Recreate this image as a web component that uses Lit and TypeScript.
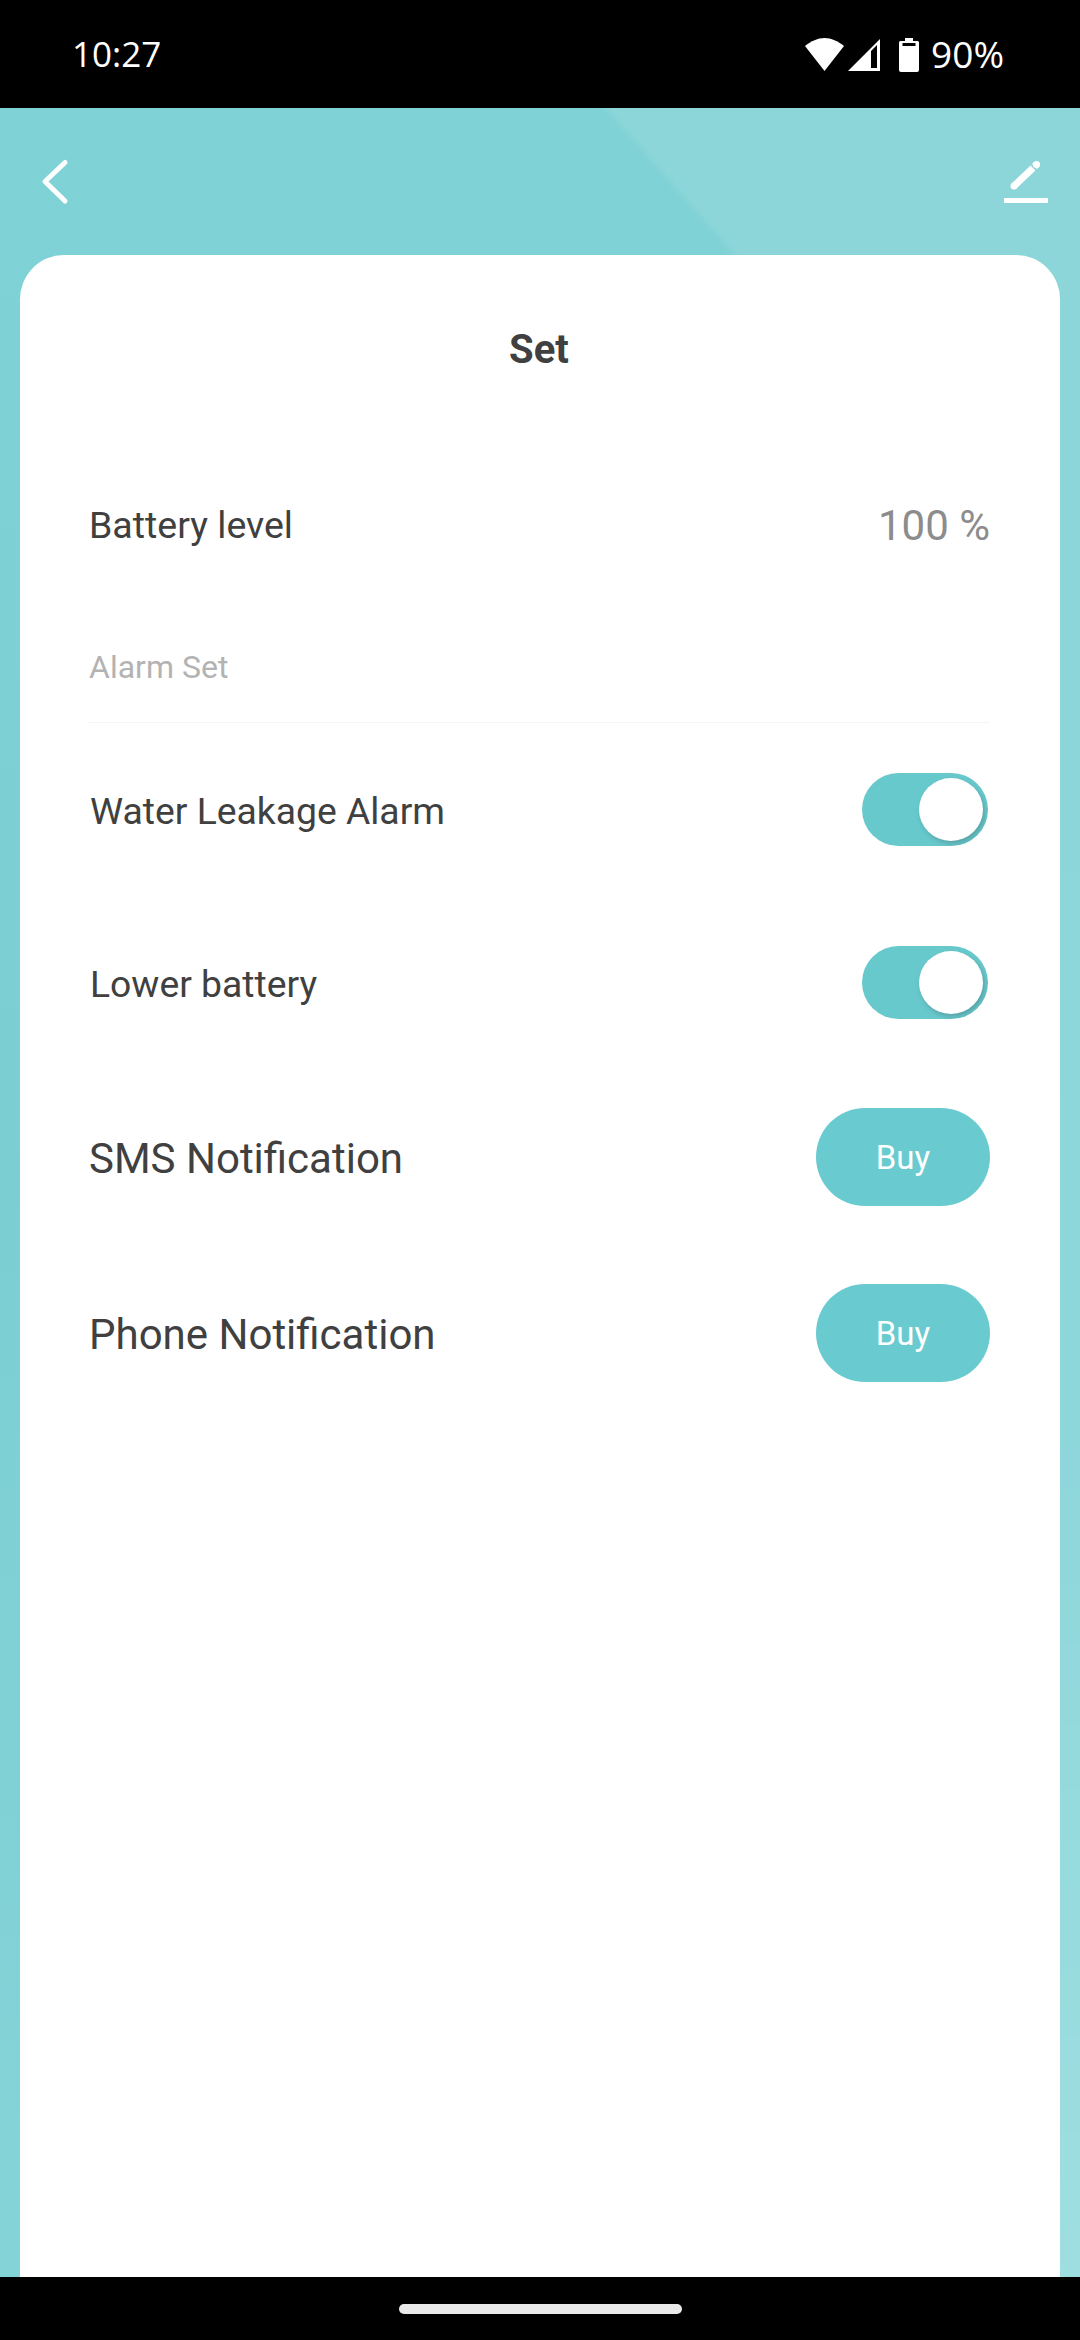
import { LitElement, html, css, svg } from "lit";
import { customElement } from "lit/decorators.js";

@customElement("app-root")
export class AppRoot extends LitElement {
  static styles = css`
    :host { display: block; width: 1080px; height: 2340px; font-family: Roboto, "Liberation Sans", sans-serif; overflow: hidden; }
    .page { width: 1080px; height: 2340px; display: flex; flex-direction: column; background: #000; }
    .status { height: 108px; flex: none; display: flex; align-items: center; justify-content: space-between; padding: 0 76px 0 72px; box-sizing: border-box; color: #fff; font-family: "Open Sans", Inter, sans-serif; font-size: 35px; }
    .time { margin-top: -2px; }
    .status-right { display: flex; align-items: center; }
    .status-right svg { display: block; margin-top: 1px; }
    .signal { margin-left: 4px; }
    .batt { margin-left: 19px; }
    .pct { margin-left: 12px; font-size: 37px; margin-top: -2px; }
    .main { flex: 1; position: relative; display: flex; flex-direction: column; overflow: hidden; }
    .bg { position: absolute; inset: 0; width: 100%; height: 100%; }
    .nav { position: relative; height: 147px; flex: none; display: flex; align-items: center; justify-content: space-between; padding: 0 32px 0 40px; }
    .nav svg { display: block; }
    .card { position: relative; flex: 1; margin: 0 20px; background: #fff; border-radius: 44px 44px 0 0; padding: 0 70px 0 69px; display: flex; flex-direction: column; }
    .title { font-size: 40px; font-weight: 700; color: #404040; text-align: center; line-height: 44px; padding-top: 73px; margin-left: -1px; }
    .row { display: flex; align-items: center; justify-content: space-between; color: #404040; }
    .battery { margin-top: 123px; height: 60px; font-size: 37.5px; }
    .battery .val { font-size: 42px; color: #8c8c8c; }
    .section { margin-top: 90px; font-size: 32px; line-height: 44px; color: #b3b3b3; padding-bottom: 33px; border-bottom: 1px solid #f5f5f5; }
    .sw-row { height: 73px; font-size: 37.3px; padding-left: 1px; }
    .sw-row > span, .buy-row > span { padding-top: 2px; }
    .sw-row.a { margin-top: 50px; }
    .sw-row.b { margin-top: 100px; }
    .switch { width: 126px; height: 73px; margin-right: 2px; border-radius: 37px; background: #68c9cd; position: relative; overflow: hidden; }
    .knob { position: absolute; right: 5px; top: 5px; width: 64px; height: 63px; border-radius: 50%; background: #fff; box-shadow: 2px 3px 5px rgba(70,120,125,.45); }
    .buy-row { height: 98px; font-size: 42px; }
    .buy-row.a { margin-top: 89px; }
    .buy-row.b { margin-top: 78px; }
    .buy { width: 174px; height: 98px; border-radius: 49px; background: #69cbcf; color: #fff; font-size: 33px; display: flex; align-items: center; justify-content: center; }
    .home { height: 63px; flex: none; display: flex; align-items: flex-start; justify-content: center; padding-top: 27px; box-sizing: border-box; }
    .pill { width: 283px; height: 10px; border-radius: 5px; background: #eaeaea; }
  `;

  render() {
    return html`<div class="page">
      <div class="status">
        <span class="time">10:27</span>
        <div class="status-right">
          <svg width="39" height="33" viewBox="0 0 39 33"><path d="M0 8 C6 3 13 0 19.500 0 S33 3 39 8 L19.500 33 Z" fill="#fff"/></svg>
          <svg class="signal" width="32" height="32" viewBox="0 0 32 32"><path fill-rule="evenodd" d="M32 0V32H0ZM29 6 23 12V29H29Z" fill="#fff"/></svg>
          <svg class="batt" width="20" height="34" viewBox="0 0 20 34"><path fill-rule="evenodd" d="M6 0H14V3H18.500Q20 3 20 4.500V32Q20 34 18 34H2Q0 34 0 32V4.500Q0 3 1.500 3H6ZM3.500 5V8H16.500V5Z" fill="#fff"/></svg>
          <span class="pct">90%</span>
        </div>
      </div>
      <div class="main">
        <svg class="bg" viewBox="0 0 1080 2232" preserveAspectRatio="none">
          <defs>
            <linearGradient id="g" x1="0" y1="0" x2="0" y2="1"><stop offset="0" stop-color="#7fd2d5"/><stop offset=".5" stop-color="#7bcfd3"/><stop offset="1" stop-color="#84d3d7"/></linearGradient>
            <linearGradient id="h" x1="0" y1="0" x2="0" y2="1"><stop offset="0" stop-color="#8cd6d9"/><stop offset=".6" stop-color="#8dd6da"/><stop offset="1" stop-color="#9fdfe1"/></linearGradient>
            <filter id="b"><feGaussianBlur stdDeviation="3"/></filter>
          </defs>
          ${svg`<rect width="1080" height="2232" fill="url(#g)"/>
          <path d="M597 -10H1100V2250H1040V160H742Z" fill="url(#h)" filter="url(#b)"/>`}
        </svg>
        <div class="nav">
          <svg width="30" height="48" viewBox="0 0 30 48"><path d="M25 4.500 5 23.500 25 43" fill="none" stroke="#fff" stroke-width="5" stroke-linecap="round" stroke-linejoin="round"/></svg>
          <svg width="44" height="43" viewBox="0 0 44 43">
            <path d="M10 26 29 8" stroke="#fff" stroke-width="7" fill="none"/><circle cx="10" cy="26" r="3.500" fill="#fff"/>
            <path d="M30.500 6.500 32.500 4.500" stroke="#fff" stroke-width="7" fill="none"/><circle cx="32.500" cy="4.500" r="3.500" fill="#fff"/>
            <rect y="38" width="44" height="5" fill="#fff"/>
          </svg>
        </div>
        <div class="card">
          <div class="title">Set</div>
          <div class="row battery"><span>Battery level</span><span class="val">100 %</span></div>
          <div class="section">Alarm Set</div>
          <div class="row sw-row a"><span>Water Leakage Alarm</span><div class="switch"><div class="knob"></div></div></div>
          <div class="row sw-row b"><span>Lower battery</span><div class="switch"><div class="knob"></div></div></div>
          <div class="row buy-row a"><span>SMS Notification</span><div class="buy">Buy</div></div>
          <div class="row buy-row b"><span>Phone Notification</span><div class="buy">Buy</div></div>
        </div>
      </div>
      <div class="home"><div class="pill"></div></div>
    </div>`;
  }
}
